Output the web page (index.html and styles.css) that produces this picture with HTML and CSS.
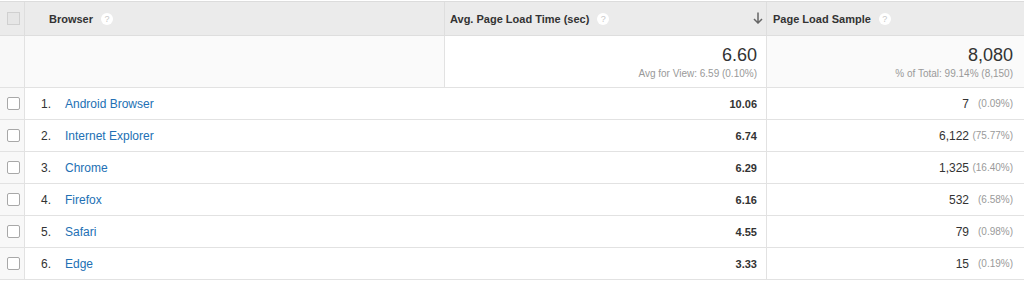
FILE: index.html
```html
<!DOCTYPE html>
<html>
<head>
<meta charset="utf-8">
<link rel="stylesheet" href="styles.css">
</head>
<body>
<div class="table">
  <div class="row head">
    <div class="c chk"><span class="box hbox"></span></div>
    <div class="c dim"><span class="htxt">Browser</span><span class="q">?</span></div>
    <div class="c m1 bl"><span class="htxt">Avg. Page Load Time (sec)</span><span class="q">?</span><svg class="sort" width="10" height="12" viewBox="0 0 10 12"><path d="M5 0.5V11M1 7l4 4 4-4" fill="none" stroke="#666" stroke-width="1.5"/></svg></div>
    <div class="c m2 bl"><span class="htxt">Page Load Sample</span><span class="q">?</span></div>
  </div>
  <div class="row sum">
    <div class="c chk"></div>
    <div class="c dim"></div>
    <div class="c m1 bl sumcell"><div class="big">6.60</div><div class="small">Avg for View: 6.59 (0.10%)</div></div>
    <div class="c m2 bl sumcell"><div class="big">8,080</div><div class="small">% of Total: 99.14% (8,150)</div></div>
  </div>
  <div class="row data">
    <div class="c chk"><span class="box"></span></div>
    <div class="c dim"><span class="idx">1.</span><a class="lnk">Android Browser</a></div>
    <div class="c m1 val">10.06</div>
    <div class="c m2 bl samp"><span class="num">7</span><span class="pct">(0.09%)</span></div>
  </div>
  <div class="row data">
    <div class="c chk"><span class="box"></span></div>
    <div class="c dim"><span class="idx">2.</span><a class="lnk">Internet Explorer</a></div>
    <div class="c m1 val">6.74</div>
    <div class="c m2 bl samp"><span class="num">6,122</span><span class="pct">(75.77%)</span></div>
  </div>
  <div class="row data">
    <div class="c chk"><span class="box"></span></div>
    <div class="c dim"><span class="idx">3.</span><a class="lnk">Chrome</a></div>
    <div class="c m1 val">6.29</div>
    <div class="c m2 bl samp"><span class="num">1,325</span><span class="pct">(16.40%)</span></div>
  </div>
  <div class="row data">
    <div class="c chk"><span class="box"></span></div>
    <div class="c dim"><span class="idx">4.</span><a class="lnk">Firefox</a></div>
    <div class="c m1 val">6.16</div>
    <div class="c m2 bl samp"><span class="num">532</span><span class="pct">(6.58%)</span></div>
  </div>
  <div class="row data">
    <div class="c chk"><span class="box"></span></div>
    <div class="c dim"><span class="idx">5.</span><a class="lnk">Safari</a></div>
    <div class="c m1 val">4.55</div>
    <div class="c m2 bl samp"><span class="num">79</span><span class="pct">(0.98%)</span></div>
  </div>
  <div class="row data">
    <div class="c chk"><span class="box"></span></div>
    <div class="c dim"><span class="idx">6.</span><a class="lnk">Edge</a></div>
    <div class="c m1 val">3.33</div>
    <div class="c m2 bl samp"><span class="num">15</span><span class="pct">(0.19%)</span></div>
  </div>
</div>
</body>
</html>
```
FILE: styles.css
```css
html, body {
  margin: 0;
  padding: 0;
  background: #fff;
}
body {
  padding-top: 1px;
  font-family: "Liberation Sans", Arial, sans-serif;
  color: #333;
}
.table {
  width: 1024px;
  border-top: 1px solid #dcdcdc;
}
.row {
  display: grid;
  grid-template-columns: 25px 419px 322px 258px;
  border-bottom: 1px solid #e2e2e2;
}
.c {
  display: flex;
  align-items: center;
  box-sizing: border-box;
}
.chk {
  justify-content: center;
  border-right: 1px solid #e2e2e2;
  background: #f8f8f8;
  padding-left: 2px;
}
.bl {
  border-left: 1px solid #e2e2e2;
}
.head {
  height: 33px;
  background: #ebebeb;
  border-bottom: 1px solid #dedede;
}
.head .chk {
  background: #ebebeb;
  border-right-color: #dedede;
}
.head .bl {
  border-left-color: #dedede;
}
.htxt {
  font-size: 11px;
  font-weight: bold;
  color: #333;
}
.head .dim {
  padding-left: 24px;
}
.head .m1 {
  padding-left: 5px;
}
.head .m2 {
  padding-left: 6px;
}
.q {
  display: inline-flex;
  align-items: center;
  justify-content: center;
  width: 12px;
  height: 12px;
  margin-left: 8px;
  border-radius: 50%;
  background: #fff;
  color: #c8c8c8;
  font-size: 9px;
  font-weight: normal;
}
.sort {
  margin-left: auto;
  margin-right: 3px;
  margin-top: -1px;
}
.box {
  width: 11px;
  height: 11px;
  border: 1px solid #a8a8a8;
  border-radius: 2px;
  background: #fff;
}
.hbox {
  border-radius: 0;
  border-color: #d0d0d0;
  background: #e6e6e6;
}
.sum {
  height: 51px;
  background: #fafafa;
}
.sum .chk {
  background: #f8f8f8;
}
.sum .m1 {
  background: #fff;
}
.sumcell {
  flex-direction: column;
  align-items: flex-end;
  justify-content: flex-start;
  padding: 9px 9px 0 0;
}
.sum .m2 {
  padding-right: 11px;
}
.big {
  font-size: 18px;
  line-height: 20px;
  color: #333;
}
.small {
  font-size: 10px;
  color: #999;
  margin-top: 3px;
}
.data {
  height: 31px;
  background: #fff;
}
.data .dim {
  padding-left: 16px;
  font-size: 12px;
}
.idx {
  width: 24px;
  color: #333;
}
.lnk {
  color: #2270b4;
}
.val {
  justify-content: flex-end;
  padding-right: 9px;
  font-size: 11px;
  font-weight: bold;
  color: #333;
}
.samp {
  justify-content: flex-end;
  padding-right: 11px;
}
.num {
  font-size: 12px;
  color: #333;
}
.pct {
  width: 44px;
  text-align: right;
  font-size: 10px;
  color: #9a9a9a;
}
```
